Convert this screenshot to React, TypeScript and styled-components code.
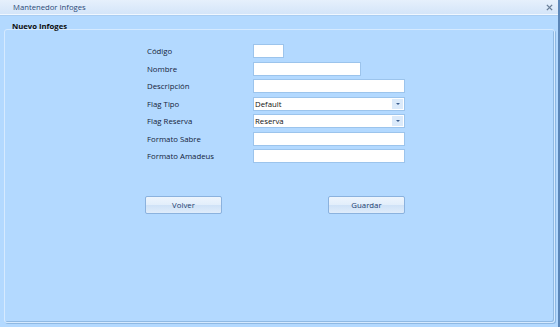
import styled, { createGlobalStyle } from "styled-components";

const GlobalStyle = createGlobalStyle`
  html, body {
    margin: 0;
    padding: 0;
    background: #b3d9ff;
  }
  * {
    box-sizing: border-box;
  }
`;

type Field = {
  label: string;
  kind: "text" | "select";
  width: number;
  value?: string;
};

const fields: Field[] = [
  { label: "Código", kind: "text", width: 31 },
  { label: "Nombre", kind: "text", width: 108 },
  { label: "Descripción", kind: "text", width: 152 },
  { label: "Flag Tipo", kind: "select", width: 152, value: "Default" },
  { label: "Flag Reserva", kind: "select", width: 152, value: "Reserva" },
  { label: "Formato Sabre", kind: "text", width: 152 },
  { label: "Formato Amadeus", kind: "text", width: 152 },
];

const App = () => {
  return (
    <>
      <GlobalStyle />
      <Window>
        <TitleBar>
          <span className="title">Mantenedor Infoges</span>
          <CloseIcon viewBox="0 0 8 8">
            <path d="M1 1 L7 7 M7 1 L1 7" />
          </CloseIcon>
        </TitleBar>
        <Body>
          <Legend>Nuevo Infoges</Legend>
          <FieldSet>
            <Form>
              {fields.map((f) => (
                <Row key={f.label}>
                  <Label>{f.label}</Label>
                  {f.kind === "select" ? (
                    <Select width={f.width}>
                      <span>{f.value}</span>
                      <Arrow>
                        <svg viewBox="0 0 4 2" width="4" height="2">
                          <path d="M0 0 H4 L2 2 Z" fill="#3d5f8f" />
                        </svg>
                      </Arrow>
                    </Select>
                  ) : (
                    <Input width={f.width} />
                  )}
                </Row>
              ))}
            </Form>
            <Buttons>
              <Button>Volver</Button>
              <Button>Guardar</Button>
            </Buttons>
          </FieldSet>
        </Body>
      </Window>
    </>
  );
};

export default App;

const Window = styled.div`
  width: 560px;
  height: 327px;
  background: #b3d9ff;
  border-right: 2px solid #5b86b8;
  display: flex;
  flex-direction: column;
  font-family: "Open Sans", "Noto Sans", sans-serif;
  font-size: 7.8px;
  color: #14233a;
`;

const TitleBar = styled.div`
  height: 15px;
  flex-shrink: 0;
  background: linear-gradient(#e6f0fc, #d4e5f9);
  border-bottom: 1px solid #f0f7ff;
  box-shadow: 0 1px 0 #a9cdf2;
  display: flex;
  align-items: center;
  justify-content: space-between;
  padding: 0 5px 0 13px;

  .title {
    color: #2a4a78;
    font-size: 7.7px;
  }
`;

const CloseIcon = styled.svg`
  width: 7px;
  height: 7px;
  path {
    stroke: #6a7f98;
    stroke-width: 1.6;
  }
`;

const Body = styled.div`
  flex: 1;
  display: flex;
  flex-direction: column;
  padding: 6px 3px 4px 4px;
`;

const Legend = styled.div`
  font-weight: bold;
  font-size: 7.7px;
  color: #0d0d0d;
  padding-left: 8px;
  height: 10px;
  line-height: 10px;
  margin-bottom: -2px;
  position: relative;
  z-index: 1;
`;

const FieldSet = styled.div`
  flex: 1;
  border: 1px solid #d6eaff;
  border-radius: 3px;
  box-shadow: inset -1px -1px 0 #8fb9e3, 1px 1px 0 #8fb9e3;
  padding: 14px 0 0 142px;
`;

const Form = styled.div`
  display: flex;
  flex-direction: column;
  gap: 3.5px;
`;

const Row = styled.div`
  display: flex;
  align-items: center;
  height: 14px;
`;

const Label = styled.div`
  width: 106px;
  color: #14233a;
`;

const Input = styled.div<{ width: number }>`
  width: ${({ width }) => width}px;
  height: 14px;
  background: #fff;
  border: 1px solid #9cc4ec;
`;

const Select = styled.div<{ width: number }>`
  width: ${({ width }) => width}px;
  height: 14px;
  background: #fff;
  border: 1px solid #9cc4ec;
  display: flex;
  align-items: center;
  justify-content: space-between;
  padding: 0 1px 0 1px;
  color: #111;
`;

const Arrow = styled.div`
  width: 11px;
  height: 10px;
  background: #dbeafa;
  display: flex;
  align-items: center;
  justify-content: center;
`;

const Buttons = styled.div`
  display: flex;
  justify-content: space-between;
  width: 260px;
  margin-top: 33px;
  margin-left: -2px;
`;

const Button = styled.div`
  width: 77px;
  height: 18px;
  border: 1px solid #8bb2de;
  border-radius: 2px;
  background: linear-gradient(#eef5fd 0%, #e2eefb 50%, #cfe2f7 51%, #dfecfb 100%);
  color: #1e3d6e;
  display: flex;
  align-items: center;
  justify-content: center;
`;
